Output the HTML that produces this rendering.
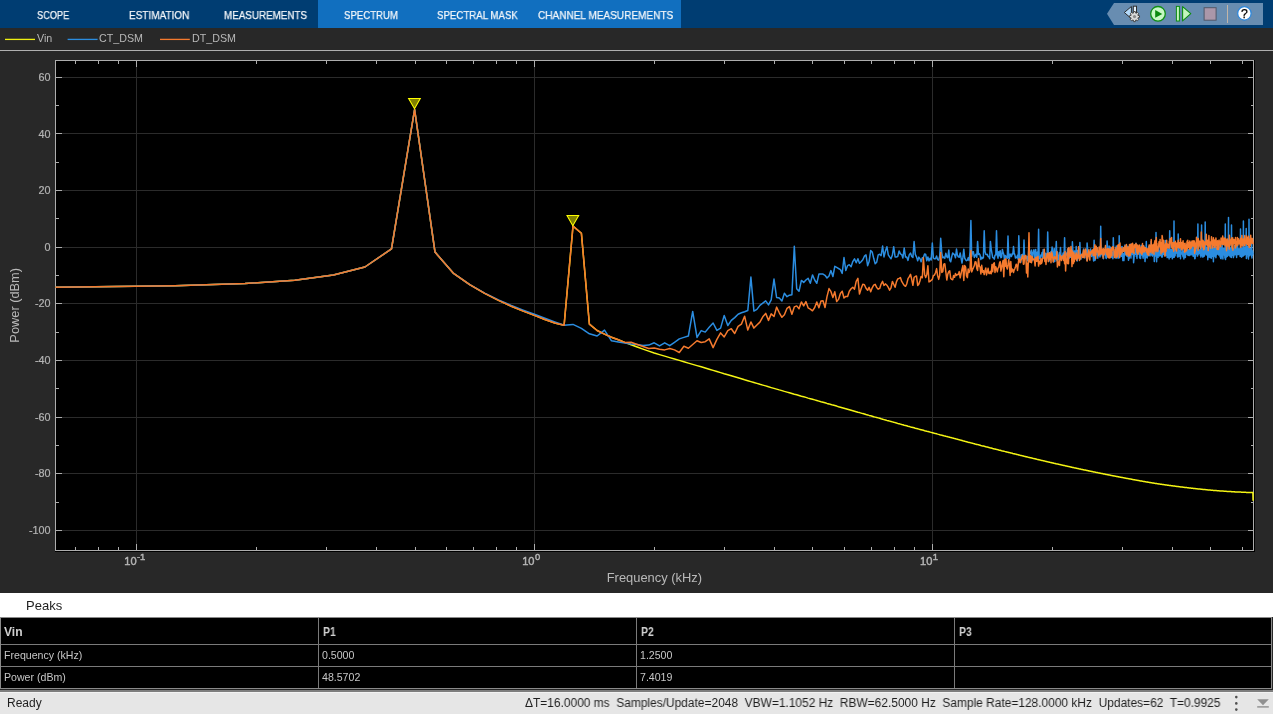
<!DOCTYPE html>
<html><head><meta charset="utf-8"><title>Spectrum Analyzer</title>
<style>
*{box-sizing:border-box;margin:0;padding:0}
html,body{width:1273px;height:714px;overflow:hidden;background:#282828;font-family:"Liberation Sans",sans-serif}
#root{position:relative;width:1273px;height:714px;overflow:hidden;background:#282828}
#hdr{position:absolute;left:0;top:0;width:1273px;height:28px;background:#003d72}
#hdr .act{position:absolute;left:318px;top:0;width:363px;height:28px;background:#116fbf}
.tab{-webkit-text-stroke:0.25px #f4f7fa;will-change:transform;position:absolute;top:1px;height:28px;line-height:29px;color:#f4f7fa;font-size:11.1px;white-space:nowrap;transform-origin:0 50%}
#qab{position:absolute;left:0;top:0}
#legend{position:absolute;left:0;top:28px;width:1273px;height:22px}
#legend .ln{position:absolute;top:10.8px;height:1.2px;width:30px}
#legend .tx{will-change:transform;position:absolute;top:4px;font-size:10.7px;line-height:13px;color:#b8b8b8;white-space:nowrap}
#sep{position:absolute;left:0;top:50px;width:1273px;height:1px;background:#b0b0b0}
.plot{position:absolute;left:0;top:0}
#peaks{position:absolute;left:0;top:593px;width:1273px;height:24px;background:#fff;color:#1e1e1e;font-size:13px;line-height:24px}
#peaks span{will-change:transform;position:absolute;left:26.2px;top:1px}
#tbl{position:absolute;left:0;top:617px;width:1272px;height:72px;background:#000;border:1px solid #8a8a8a}
#tbl .h{position:absolute;left:0;width:1270px;height:1px;background:#7a7a7a}
#tbl .v{position:absolute;top:0;width:1px;height:70px;background:#7a7a7a}
#tbl .c{will-change:transform;position:absolute;font-size:10.6px;line-height:13px;color:#c6c6c6;white-space:nowrap;transform-origin:0 50%}
#tbl .b{font-weight:bold;color:#cfcfcf;font-size:12.1px}
#status{position:absolute;left:0;top:692px;width:1273px;height:22px;background:#e6e6e6;color:#1e1e1e;font-size:12px;line-height:24px}
#status span{will-change:transform;position:absolute;top:-1px;white-space:nowrap;transform-origin:0 50%}
</style></head><body>
<div id="root">
<div id="hdr"><div class="act"></div>
<div class="tab" id="t1" style="left:36.8px;transform:scaleX(0.829)">SCOPE</div>
<div class="tab" id="t2" style="left:128.6px;transform:scaleX(0.900)">ESTIMATION</div>
<div class="tab" id="t3" style="left:223.6px;transform:scaleX(0.886)">MEASUREMENTS</div>
<div class="tab" id="t4" style="left:343.7px;transform:scaleX(0.866)">SPECTRUM</div>
<div class="tab" id="t5" style="left:436.6px;transform:scaleX(0.872)">SPECTRAL MASK</div>
<div class="tab" id="t6" style="left:537.8px;transform:scaleX(0.905)">CHANNEL MEASUREMENTS</div>
<svg id="qab" width="1273" height="28" viewBox="0 0 1273 28">
<path d="M1107,13.8 L1114,3 L1263,3 L1263,25 L1114,25 Z" fill="#688db1"/>
<!-- step back with gear -->
<path d="M1124.3,12.5 L1131.4,6.5 L1131.4,18.6 Z" fill="#b5dafa" stroke="#2e2e2e" stroke-width="1" stroke-linejoin="round"/>
<rect x="1133.3" y="6.2" width="3.2" height="9.5" fill="#e4f1fc" stroke="#2e2e2e" stroke-width="1"/>
<g transform="translate(1134.5,16.6)"><path d="M3.35,-1.31 L5.03,-0.84 L5.03,0.84 L3.35,1.31 L3.30,1.44 L4.15,2.97 L2.97,4.15 L1.44,3.30 L1.31,3.35 L0.84,5.03 L-0.84,5.03 L-1.31,3.35 L-1.44,3.30 L-2.97,4.15 L-4.15,2.97 L-3.30,1.44 L-3.35,1.31 L-5.03,0.84 L-5.03,-0.84 L-3.35,-1.31 L-3.30,-1.44 L-4.15,-2.97 L-2.97,-4.15 L-1.44,-3.30 L-1.31,-3.35 L-0.84,-5.03 L0.84,-5.03 L1.31,-3.35 L1.44,-3.30 L2.97,-4.15 L4.15,-2.97 L3.30,-1.44 Z" fill="#dadada" stroke="#3a3a3a" stroke-width="0.9" stroke-linejoin="round"/><circle r="1.6" fill="#8c8c8c"/></g>
<!-- play -->
<circle cx="1158" cy="13.8" r="7.3" fill="#c8f8c4" stroke="#0f8f14" stroke-width="1.3"/>
<path d="M1155.2,10 L1162.3,13.9 L1155.2,17.8 Z" fill="#0a8a0f"/>
<!-- step fwd -->
<rect x="1176.4" y="6.4" width="3" height="14.6" fill="#c3f5be" stroke="#0d8c12" stroke-width="1"/>
<path d="M1182.6,6.6 L1190.8,13.7 L1182.6,20.8 Z" fill="#c3f5be" stroke="#0d8c12" stroke-width="1.1" stroke-linejoin="round"/>
<!-- stop -->
<rect x="1204.1" y="7.7" width="12" height="12.5" fill="#ab97a9" stroke="#515868" stroke-width="1"/>
<!-- sep -->
<rect x="1227" y="5" width="1" height="18" fill="#c2b5a7"/>
<!-- help -->
<circle cx="1244.4" cy="13.4" r="6.7" fill="#fff" stroke="#2a87de" stroke-width="1.2"/>
<text x="1244.5" y="17.8" text-anchor="middle" font-family="Liberation Sans, sans-serif" font-size="12.2" fill="#000" stroke="#000" stroke-width="0.25">?</text>
</svg>
</div>
<div id="legend"><svg style="position:absolute;left:0;top:0" width="260" height="22" viewBox="0 0 260 22"><g stroke-width="1.3" fill="none"><path d="M5,11.4H35" stroke="#f0f010"/><path d="M67.6,11.4H97.6" stroke="#2b8de0"/><path d="M160,11.4H189.8" stroke="#f57a2e"/></g></svg>
<div class="tx" style="left:37px">Vin</div>
<div class="tx" style="left:99.3px">CT_DSM</div>
<div class="tx" style="left:191.8px">DT_DSM</div>
</div>
<div id="sep"></div>
<svg class="plot" width="1273" height="593" viewBox="0 0 1273 593">
<rect x="55.0" y="60.0" width="1200.0" height="492.0" fill="#000"/>
<g stroke="#2b2b2b" stroke-width="1" shape-rendering="crispEdges"><line x1="55.5" x2="1253.5" y1="77.5" y2="77.5"/><line x1="55.5" x2="1253.5" y1="133.5" y2="133.5"/><line x1="55.5" x2="1253.5" y1="190.5" y2="190.5"/><line x1="55.5" x2="1253.5" y1="247.5" y2="247.5"/><line x1="55.5" x2="1253.5" y1="303.5" y2="303.5"/><line x1="55.5" x2="1253.5" y1="360.5" y2="360.5"/><line x1="55.5" x2="1253.5" y1="417.5" y2="417.5"/><line x1="55.5" x2="1253.5" y1="473.5" y2="473.5"/><line x1="55.5" x2="1253.5" y1="530.5" y2="530.5"/><line x1="136.5" x2="136.5" y1="60.5" y2="550.5"/><line x1="534.5" x2="534.5" y1="60.5" y2="550.5"/><line x1="932.5" x2="932.5" y1="60.5" y2="550.5"/></g>
<g stroke="#adadad" stroke-width="1" shape-rendering="crispEdges"><line x1="55.5" x2="61.5" y1="77.5" y2="77.5"/><line x1="1247.5" x2="1253.5" y1="77.5" y2="77.5"/><line x1="55.5" x2="58.5" y1="105.5" y2="105.5"/><line x1="1250.5" x2="1253.5" y1="105.5" y2="105.5"/><line x1="55.5" x2="61.5" y1="133.5" y2="133.5"/><line x1="1247.5" x2="1253.5" y1="133.5" y2="133.5"/><line x1="55.5" x2="58.5" y1="162.5" y2="162.5"/><line x1="1250.5" x2="1253.5" y1="162.5" y2="162.5"/><line x1="55.5" x2="61.5" y1="190.5" y2="190.5"/><line x1="1247.5" x2="1253.5" y1="190.5" y2="190.5"/><line x1="55.5" x2="58.5" y1="218.5" y2="218.5"/><line x1="1250.5" x2="1253.5" y1="218.5" y2="218.5"/><line x1="55.5" x2="61.5" y1="247.5" y2="247.5"/><line x1="1247.5" x2="1253.5" y1="247.5" y2="247.5"/><line x1="55.5" x2="58.5" y1="275.5" y2="275.5"/><line x1="1250.5" x2="1253.5" y1="275.5" y2="275.5"/><line x1="55.5" x2="61.5" y1="303.5" y2="303.5"/><line x1="1247.5" x2="1253.5" y1="303.5" y2="303.5"/><line x1="55.5" x2="58.5" y1="332.5" y2="332.5"/><line x1="1250.5" x2="1253.5" y1="332.5" y2="332.5"/><line x1="55.5" x2="61.5" y1="360.5" y2="360.5"/><line x1="1247.5" x2="1253.5" y1="360.5" y2="360.5"/><line x1="55.5" x2="58.5" y1="388.5" y2="388.5"/><line x1="1250.5" x2="1253.5" y1="388.5" y2="388.5"/><line x1="55.5" x2="61.5" y1="417.5" y2="417.5"/><line x1="1247.5" x2="1253.5" y1="417.5" y2="417.5"/><line x1="55.5" x2="58.5" y1="445.5" y2="445.5"/><line x1="1250.5" x2="1253.5" y1="445.5" y2="445.5"/><line x1="55.5" x2="61.5" y1="473.5" y2="473.5"/><line x1="1247.5" x2="1253.5" y1="473.5" y2="473.5"/><line x1="55.5" x2="58.5" y1="502.5" y2="502.5"/><line x1="1250.5" x2="1253.5" y1="502.5" y2="502.5"/><line x1="55.5" x2="61.5" y1="530.5" y2="530.5"/><line x1="1247.5" x2="1253.5" y1="530.5" y2="530.5"/><line x1="75.5" x2="75.5" y1="60.5" y2="64.0"/><line x1="75.5" x2="75.5" y1="547.0" y2="550.5"/><line x1="98.5" x2="98.5" y1="60.5" y2="64.0"/><line x1="98.5" x2="98.5" y1="547.0" y2="550.5"/><line x1="118.5" x2="118.5" y1="60.5" y2="64.0"/><line x1="118.5" x2="118.5" y1="547.0" y2="550.5"/><line x1="136.5" x2="136.5" y1="60.5" y2="66.5"/><line x1="136.5" x2="136.5" y1="543.5" y2="550.5"/><line x1="256.5" x2="256.5" y1="60.5" y2="64.0"/><line x1="256.5" x2="256.5" y1="547.0" y2="550.5"/><line x1="326.5" x2="326.5" y1="60.5" y2="64.0"/><line x1="326.5" x2="326.5" y1="547.0" y2="550.5"/><line x1="376.5" x2="376.5" y1="60.5" y2="64.0"/><line x1="376.5" x2="376.5" y1="547.0" y2="550.5"/><line x1="415.5" x2="415.5" y1="60.5" y2="64.0"/><line x1="415.5" x2="415.5" y1="547.0" y2="550.5"/><line x1="446.5" x2="446.5" y1="60.5" y2="64.0"/><line x1="446.5" x2="446.5" y1="547.0" y2="550.5"/><line x1="473.5" x2="473.5" y1="60.5" y2="64.0"/><line x1="473.5" x2="473.5" y1="547.0" y2="550.5"/><line x1="496.5" x2="496.5" y1="60.5" y2="64.0"/><line x1="496.5" x2="496.5" y1="547.0" y2="550.5"/><line x1="516.5" x2="516.5" y1="60.5" y2="64.0"/><line x1="516.5" x2="516.5" y1="547.0" y2="550.5"/><line x1="534.5" x2="534.5" y1="60.5" y2="66.5"/><line x1="534.5" x2="534.5" y1="543.5" y2="550.5"/><line x1="654.5" x2="654.5" y1="60.5" y2="64.0"/><line x1="654.5" x2="654.5" y1="547.0" y2="550.5"/><line x1="724.5" x2="724.5" y1="60.5" y2="64.0"/><line x1="724.5" x2="724.5" y1="547.0" y2="550.5"/><line x1="774.5" x2="774.5" y1="60.5" y2="64.0"/><line x1="774.5" x2="774.5" y1="547.0" y2="550.5"/><line x1="812.5" x2="812.5" y1="60.5" y2="64.0"/><line x1="812.5" x2="812.5" y1="547.0" y2="550.5"/><line x1="844.5" x2="844.5" y1="60.5" y2="64.0"/><line x1="844.5" x2="844.5" y1="547.0" y2="550.5"/><line x1="871.5" x2="871.5" y1="60.5" y2="64.0"/><line x1="871.5" x2="871.5" y1="547.0" y2="550.5"/><line x1="894.5" x2="894.5" y1="60.5" y2="64.0"/><line x1="894.5" x2="894.5" y1="547.0" y2="550.5"/><line x1="914.5" x2="914.5" y1="60.5" y2="64.0"/><line x1="914.5" x2="914.5" y1="547.0" y2="550.5"/><line x1="932.5" x2="932.5" y1="60.5" y2="66.5"/><line x1="932.5" x2="932.5" y1="543.5" y2="550.5"/><line x1="1052.5" x2="1052.5" y1="60.5" y2="64.0"/><line x1="1052.5" x2="1052.5" y1="547.0" y2="550.5"/><line x1="1122.5" x2="1122.5" y1="60.5" y2="64.0"/><line x1="1122.5" x2="1122.5" y1="547.0" y2="550.5"/><line x1="1172.5" x2="1172.5" y1="60.5" y2="64.0"/><line x1="1172.5" x2="1172.5" y1="547.0" y2="550.5"/><line x1="1210.5" x2="1210.5" y1="60.5" y2="64.0"/><line x1="1210.5" x2="1210.5" y1="547.0" y2="550.5"/><line x1="1242.5" x2="1242.5" y1="60.5" y2="64.0"/><line x1="1242.5" x2="1242.5" y1="547.0" y2="550.5"/></g>
<rect x="55.5" y="60.5" width="1198.0" height="490.0" fill="none" stroke="#adadad" stroke-width="1" shape-rendering="crispEdges"/>
<g fill="none" stroke-width="1.5" stroke-linejoin="round">
<path stroke="#f5f514" d="M55.3,287.3 L175.1,285.7 L245.1,283.6 L294.8,280.2 L333.4,275.1 L364.9,267.0 L391.5,248.9 L414.6,109.5 L435.0,252.1 L453.2,273.1 L469.7,284.7 L484.7,293.4 L498.5,300.4 L511.3,306.2 L523.2,311.1 L534.4,315.4 L544.9,319.5 L554.8,323.0 L564.1,325.3 L573.0,226.1 L581.4,233.2 L589.4,324.2 L597.1,330.5 L604.5,334.1 L611.5,337.2 L618.3,339.8 L624.8,342.4 L631.1,344.7 L637.2,347.0 L643.0,349.1 L648.7,351.1 L654.2,353.0 L659.5,354.6 L664.7,356.1 L669.7,357.6 L674.5,359.0 L679.3,360.4 L683.9,361.8 L688.4,363.1 L692.7,364.4 L697.0,365.6 L701.2,366.8 L705.2,368.0 L709.2,369.2 L713.1,370.4 L716.9,371.5 L720.6,372.6 L724.2,373.7 L727.8,374.7 L731.3,375.8 L734.7,376.8 L738.1,377.8 L741.4,378.8 L744.6,379.8 L747.8,380.7 L750.9,381.6 L753.9,382.5 L756.9,383.4 L759.9,384.3 L762.8,385.1 L765.7,385.9 L768.5,386.8 L771.2,387.6 L774.0,388.4 L776.6,389.1 L779.3,389.9 L781.9,390.6 L784.4,391.4 L787.0,392.1 L789.4,392.8 L791.9,393.5 L794.3,394.2 L796.7,394.8 L799.0,395.5 L801.4,396.2 L803.7,396.8 L805.9,397.4 L808.1,398.1 L810.3,398.7 L812.5,399.3 L814.7,399.9 L816.8,400.5 L818.9,401.1 L821.0,401.7 L823.0,402.2 L825.0,402.8 L827.0,403.4 L829.0,403.9 L830.9,404.5 L832.9,405.1 L834.8,405.6 L836.7,406.1 L838.5,406.7 L840.4,407.2 L842.2,407.7 L844.0,408.2 L845.8,408.7 L847.6,409.2 L849.3,409.7 L851.1,410.2 L852.8,410.7 L854.5,411.2 L856.2,411.7 L857.9,412.2 L859.5,412.6 L861.1,413.1 L862.8,413.6 L864.4,414.0 L866.0,414.5 L867.6,414.9 L869.1,415.4 L870.7,415.8 L872.2,416.2 L873.7,416.7 L875.2,417.1 L876.7,417.5 L878.2,417.9 L879.7,418.3 L881.1,418.8 L882.6,419.2 L884.0,419.6 L885.4,420.0 L886.9,420.4 L888.3,420.7 L889.6,421.1 L891.0,421.5 L892.4,421.9 L893.7,422.3 L895.1,422.6 L896.4,423.0 L897.7,423.4 L899.1,423.7 L900.4,424.1 L901.7,424.5 L902.9,424.8 L904.2,425.2 L905.5,425.5 L906.7,425.8 L908.0,426.2 L909.2,426.5 L910.5,426.9 L911.7,427.2 L912.9,427.5 L914.1,427.8 L915.3,428.2 L916.5,428.5 L917.7,428.8 L918.8,429.1 L920.0,429.4 L921.1,429.7 L922.3,430.0 L923.4,430.3 L924.6,430.7 L925.7,431.0 L926.8,431.3 L927.9,431.5 L929.0,431.8 L930.1,432.1 L931.2,432.4 L932.3,432.7 L933.4,433.0 L934.4,433.3 L935.5,433.6 L936.6,433.8 L937.6,434.1 L938.7,434.4 L939.7,434.7 L940.7,434.9 L941.8,435.2 L942.8,435.5 L943.8,435.8 L944.8,436.0 L945.8,436.3 L946.8,436.5 L947.8,436.8 L948.8,437.1 L949.7,437.3 L950.7,437.6 L951.7,437.8 L952.7,438.1 L953.6,438.3 L954.6,438.6 L955.5,438.8 L956.5,439.1 L957.4,439.3 L958.3,439.6 L959.2,439.8 L960.2,440.1 L961.1,440.3 L962.0,440.5 L962.9,440.8 L963.8,441.0 L964.7,441.3 L965.6,441.5 L966.5,441.7 L967.4,441.9 L968.2,442.2 L969.1,442.4 L970.0,442.6 L970.9,442.9 L971.7,443.1 L972.6,443.3 L973.4,443.5 L974.3,443.7 L975.1,444.0 L976.0,444.2 L976.8,444.4 L977.6,444.6 L978.5,444.8 L979.3,445.0 L980.1,445.2 L980.9,445.5 L981.7,445.7 L982.6,445.9 L983.4,446.1 L984.2,446.3 L985.0,446.5 L985.8,446.7 L986.5,446.9 L987.3,447.1 L988.1,447.3 L988.9,447.5 L989.7,447.7 L990.4,447.9 L991.2,448.1 L992.0,448.3 L992.7,448.5 L993.5,448.7 L994.3,448.9 L995.0,449.0 L995.8,449.2 L996.5,449.4 L997.3,449.6 L998.0,449.8 L998.7,450.0 L999.5,450.2 L1000.2,450.3 L1000.9,450.5 L1001.6,450.7 L1002.4,450.9 L1003.1,451.1 L1003.8,451.2 L1004.5,451.4 L1005.2,451.6 L1005.9,451.8 L1006.6,452.0 L1007.3,452.1 L1008.0,452.3 L1008.7,452.5 L1009.4,452.6 L1010.1,452.8 L1010.8,453.0 L1011.5,453.1 L1012.2,453.3 L1012.8,453.5 L1013.5,453.7 L1014.2,453.8 L1014.9,454.0 L1015.5,454.1 L1016.2,454.3 L1016.9,454.5 L1017.5,454.6 L1018.2,454.8 L1018.8,455.0 L1019.5,455.1 L1020.1,455.3 L1020.8,455.4 L1021.4,455.6 L1022.1,455.7 L1022.7,455.9 L1023.4,456.0 L1024.0,456.2 L1024.6,456.4 L1025.3,456.5 L1025.9,456.7 L1026.5,456.8 L1027.1,457.0 L1027.8,457.1 L1028.4,457.3 L1029.0,457.4 L1029.6,457.5 L1030.2,457.7 L1030.8,457.8 L1031.5,458.0 L1032.1,458.1 L1032.7,458.3 L1033.3,458.4 L1033.9,458.6 L1034.5,458.7 L1035.1,458.8 L1035.7,459.0 L1036.3,459.1 L1036.8,459.3 L1037.4,459.4 L1038.0,459.5 L1038.6,459.7 L1039.2,459.8 L1039.8,459.9 L1040.4,460.1 L1040.9,460.2 L1041.5,460.4 L1042.1,460.5 L1042.6,460.6 L1043.2,460.7 L1043.8,460.9 L1044.3,461.0 L1044.9,461.1 L1045.5,461.3 L1046.0,461.4 L1046.6,461.5 L1047.2,461.7 L1047.7,461.8 L1048.3,461.9 L1048.8,462.0 L1049.4,462.2 L1049.9,462.3 L1050.5,462.4 L1051.0,462.5 L1051.5,462.7 L1052.1,462.8 L1052.6,462.9 L1053.2,463.0 L1053.7,463.2 L1054.2,463.3 L1054.8,463.4 L1055.3,463.5 L1055.8,463.7 L1056.3,463.8 L1056.9,463.9 L1057.4,464.0 L1057.9,464.1 L1058.4,464.2 L1059.0,464.4 L1059.5,464.5 L1060.0,464.6 L1060.5,464.7 L1061.0,464.8 L1061.5,464.9 L1062.0,465.1 L1062.6,465.2 L1063.1,465.3 L1063.6,465.4 L1064.1,465.5 L1064.6,465.6 L1065.1,465.7 L1065.6,465.9 L1066.1,466.0 L1066.6,466.1 L1067.1,466.2 L1067.6,466.3 L1068.1,466.4 L1068.5,466.5 L1069.0,466.6 L1069.5,466.7 L1070.0,466.8 L1070.5,466.9 L1071.0,467.0 L1071.5,467.2 L1072.0,467.3 L1072.4,467.4 L1072.9,467.5 L1073.4,467.6 L1073.9,467.7 L1074.3,467.8 L1074.8,467.9 L1075.3,468.0 L1075.8,468.1 L1076.2,468.2 L1076.7,468.3 L1077.2,468.4 L1077.6,468.5 L1078.1,468.6 L1078.6,468.7 L1079.0,468.8 L1079.5,468.9 L1079.9,469.0 L1080.4,469.1 L1080.9,469.2 L1081.3,469.3 L1081.8,469.4 L1082.2,469.5 L1082.7,469.6 L1083.1,469.7 L1083.6,469.8 L1084.0,469.9 L1084.5,470.0 L1084.9,470.0 L1085.4,470.1 L1085.8,470.2 L1086.3,470.3 L1086.7,470.4 L1087.1,470.5 L1087.6,470.6 L1088.0,470.7 L1088.5,470.8 L1088.9,470.9 L1089.3,471.0 L1089.8,471.1 L1090.2,471.2 L1090.6,471.2 L1091.1,471.3 L1091.5,471.4 L1091.9,471.5 L1092.4,471.6 L1092.8,471.7 L1093.2,471.8 L1093.6,471.9 L1094.1,472.0 L1094.5,472.0 L1094.9,472.1 L1095.3,472.2 L1095.7,472.3 L1096.2,472.4 L1096.6,472.5 L1097.0,472.6 L1097.4,472.6 L1097.8,472.7 L1098.2,472.8 L1098.7,472.9 L1099.1,473.0 L1099.5,473.1 L1099.9,473.2 L1100.3,473.2 L1100.7,473.3 L1101.1,473.4 L1101.5,473.5 L1101.9,473.6 L1102.3,473.6 L1102.7,473.7 L1103.1,473.8 L1103.5,473.9 L1103.9,474.0 L1104.3,474.1 L1104.7,474.1 L1105.1,474.2 L1105.5,474.3 L1105.9,474.4 L1106.3,474.5 L1106.7,474.5 L1107.1,474.6 L1107.5,474.7 L1107.9,474.8 L1108.3,474.8 L1108.7,474.9 L1109.1,475.0 L1109.5,475.1 L1109.8,475.1 L1110.2,475.2 L1110.6,475.3 L1111.0,475.4 L1111.4,475.4 L1111.8,475.5 L1112.1,475.6 L1112.5,475.7 L1112.9,475.7 L1113.3,475.8 L1113.7,475.9 L1114.0,476.0 L1114.4,476.0 L1114.8,476.1 L1115.2,476.2 L1115.5,476.3 L1115.9,476.3 L1116.3,476.4 L1116.7,476.5 L1117.0,476.5 L1117.4,476.6 L1117.8,476.7 L1118.1,476.7 L1118.5,476.8 L1118.9,476.9 L1119.2,477.0 L1119.6,477.0 L1120.0,477.1 L1120.3,477.2 L1120.7,477.2 L1121.1,477.3 L1121.4,477.4 L1121.8,477.4 L1122.1,477.5 L1122.5,477.6 L1122.9,477.6 L1123.2,477.7 L1123.6,477.8 L1123.9,477.8 L1124.3,477.9 L1124.6,478.0 L1125.0,478.0 L1125.4,478.1 L1125.7,478.2 L1126.1,478.2 L1126.4,478.3 L1126.8,478.4 L1127.1,478.4 L1127.5,478.5 L1127.8,478.6 L1128.2,478.6 L1128.5,478.7 L1128.9,478.8 L1129.2,478.8 L1129.5,478.9 L1129.9,479.0 L1130.2,479.0 L1130.6,479.1 L1130.9,479.1 L1131.3,479.2 L1131.6,479.3 L1131.9,479.3 L1132.3,479.4 L1132.6,479.5 L1133.0,479.5 L1133.3,479.6 L1133.6,479.7 L1134.0,479.7 L1134.3,479.8 L1134.6,479.8 L1135.0,479.9 L1135.3,480.0 L1135.6,480.0 L1136.0,480.1 L1136.3,480.1 L1136.6,480.2 L1137.0,480.3 L1137.3,480.3 L1137.6,480.4 L1138.0,480.4 L1138.3,480.5 L1138.6,480.6 L1138.9,480.6 L1139.3,480.7 L1139.6,480.7 L1139.9,480.8 L1140.2,480.9 L1140.6,480.9 L1140.9,481.0 L1141.2,481.0 L1141.5,481.1 L1141.9,481.1 L1142.2,481.2 L1142.5,481.3 L1142.8,481.3 L1143.1,481.4 L1143.5,481.4 L1143.8,481.5 L1144.1,481.5 L1144.4,481.6 L1144.7,481.6 L1145.0,481.7 L1145.4,481.8 L1145.7,481.8 L1146.0,481.9 L1146.3,481.9 L1146.6,482.0 L1146.9,482.0 L1147.2,482.1 L1147.5,482.1 L1147.9,482.2 L1148.2,482.2 L1148.5,482.3 L1148.8,482.3 L1149.1,482.4 L1149.4,482.4 L1149.7,482.5 L1150.0,482.5 L1150.3,482.6 L1150.6,482.6 L1150.9,482.7 L1151.2,482.7 L1151.5,482.8 L1151.8,482.8 L1152.1,482.9 L1152.4,482.9 L1152.8,483.0 L1153.1,483.0 L1153.4,483.1 L1153.7,483.1 L1154.0,483.2 L1154.3,483.2 L1154.6,483.3 L1154.8,483.3 L1155.1,483.4 L1155.4,483.4 L1155.7,483.5 L1156.0,483.5 L1156.3,483.6 L1156.6,483.6 L1156.9,483.6 L1157.2,483.7 L1157.5,483.7 L1157.8,483.8 L1158.1,483.8 L1158.4,483.9 L1158.7,483.9 L1159.0,483.9 L1159.3,484.0 L1159.6,484.0 L1159.8,484.1 L1160.1,484.1 L1160.4,484.2 L1160.7,484.2 L1161.0,484.2 L1161.3,484.3 L1161.6,484.3 L1161.9,484.4 L1162.1,484.4 L1162.4,484.5 L1162.7,484.5 L1163.0,484.5 L1163.3,484.6 L1163.6,484.6 L1163.8,484.7 L1164.1,484.7 L1164.4,484.7 L1164.7,484.8 L1165.0,484.8 L1165.3,484.9 L1165.5,484.9 L1165.8,484.9 L1166.1,485.0 L1166.4,485.0 L1166.7,485.0 L1166.9,485.1 L1167.2,485.1 L1167.5,485.2 L1167.8,485.2 L1168.0,485.2 L1168.3,485.3 L1168.6,485.3 L1168.9,485.4 L1169.1,485.4 L1169.4,485.4 L1169.7,485.5 L1170.0,485.5 L1170.2,485.5 L1170.5,485.6 L1170.8,485.6 L1171.0,485.7 L1171.3,485.7 L1171.6,485.7 L1171.9,485.8 L1172.1,485.8 L1172.4,485.8 L1172.7,485.9 L1172.9,485.9 L1173.2,485.9 L1173.5,486.0 L1173.7,486.0 L1174.0,486.0 L1174.3,486.1 L1174.5,486.1 L1174.8,486.1 L1175.1,486.2 L1175.3,486.2 L1175.6,486.3 L1175.9,486.3 L1176.1,486.3 L1176.4,486.4 L1176.7,486.4 L1176.9,486.4 L1177.2,486.5 L1177.4,486.5 L1177.7,486.5 L1178.0,486.6 L1178.2,486.6 L1178.5,486.6 L1178.7,486.7 L1179.0,486.7 L1179.3,486.7 L1179.5,486.8 L1179.8,486.8 L1180.0,486.8 L1180.3,486.9 L1180.5,486.9 L1180.8,486.9 L1181.1,486.9 L1181.3,487.0 L1181.6,487.0 L1181.8,487.0 L1182.1,487.1 L1182.3,487.1 L1182.6,487.1 L1182.8,487.2 L1183.1,487.2 L1183.3,487.2 L1183.6,487.3 L1183.9,487.3 L1184.1,487.3 L1184.4,487.4 L1184.6,487.4 L1184.9,487.4 L1185.1,487.4 L1185.4,487.5 L1185.6,487.5 L1185.9,487.5 L1186.1,487.6 L1186.4,487.6 L1186.6,487.6 L1186.9,487.6 L1187.1,487.7 L1187.3,487.7 L1187.6,487.7 L1187.8,487.8 L1188.1,487.8 L1188.3,487.8 L1188.6,487.8 L1188.8,487.9 L1189.1,487.9 L1189.3,487.9 L1189.6,488.0 L1189.8,488.0 L1190.0,488.0 L1190.3,488.0 L1190.5,488.1 L1190.8,488.1 L1191.0,488.1 L1191.3,488.2 L1191.5,488.2 L1191.7,488.2 L1192.0,488.2 L1192.2,488.3 L1192.5,488.3 L1192.7,488.3 L1192.9,488.3 L1193.2,488.4 L1193.4,488.4 L1193.6,488.4 L1193.9,488.4 L1194.1,488.5 L1194.4,488.5 L1194.6,488.5 L1194.8,488.6 L1195.1,488.6 L1195.3,488.6 L1195.5,488.6 L1195.8,488.7 L1196.0,488.7 L1196.2,488.7 L1196.5,488.7 L1196.7,488.8 L1196.9,488.8 L1197.2,488.8 L1197.4,488.8 L1197.6,488.9 L1197.9,488.9 L1198.1,488.9 L1198.3,488.9 L1198.6,489.0 L1198.8,489.0 L1199.0,489.0 L1199.3,489.0 L1199.5,489.0 L1199.7,489.1 L1200.0,489.1 L1200.2,489.1 L1200.4,489.1 L1200.6,489.2 L1200.9,489.2 L1201.1,489.2 L1201.3,489.2 L1201.6,489.3 L1201.8,489.3 L1202.0,489.3 L1202.2,489.3 L1202.5,489.4 L1202.7,489.4 L1202.9,489.4 L1203.1,489.4 L1203.4,489.4 L1203.6,489.5 L1203.8,489.5 L1204.0,489.5 L1204.3,489.5 L1204.5,489.6 L1204.7,489.6 L1204.9,489.6 L1205.2,489.6 L1205.4,489.6 L1205.6,489.7 L1205.8,489.7 L1206.0,489.7 L1206.3,489.7 L1206.5,489.7 L1206.7,489.8 L1206.9,489.8 L1207.1,489.8 L1207.4,489.8 L1207.6,489.9 L1207.8,489.9 L1208.0,489.9 L1208.2,489.9 L1208.5,489.9 L1208.7,490.0 L1208.9,490.0 L1209.1,490.0 L1209.3,490.0 L1209.6,490.0 L1209.8,490.1 L1210.0,490.1 L1210.2,490.1 L1210.4,490.1 L1210.6,490.1 L1210.9,490.2 L1211.1,490.2 L1211.3,490.2 L1211.5,490.2 L1211.7,490.2 L1211.9,490.2 L1212.1,490.3 L1212.4,490.3 L1212.6,490.3 L1212.8,490.3 L1213.0,490.3 L1213.2,490.4 L1213.4,490.4 L1213.6,490.4 L1213.8,490.4 L1214.1,490.4 L1214.3,490.5 L1214.5,490.5 L1214.7,490.5 L1214.9,490.5 L1215.1,490.5 L1215.3,490.5 L1215.5,490.6 L1215.7,490.6 L1215.9,490.6 L1216.2,490.6 L1216.4,490.6 L1216.6,490.6 L1216.8,490.7 L1217.0,490.7 L1217.2,490.7 L1217.4,490.7 L1217.6,490.7 L1217.8,490.7 L1218.0,490.8 L1218.2,490.8 L1218.4,490.8 L1218.6,490.8 L1218.9,490.8 L1219.1,490.8 L1219.3,490.8 L1219.5,490.9 L1219.7,490.9 L1219.9,490.9 L1220.1,490.9 L1220.3,490.9 L1220.5,490.9 L1220.7,490.9 L1220.9,491.0 L1221.1,491.0 L1221.3,491.0 L1221.5,491.0 L1221.7,491.0 L1221.9,491.0 L1222.1,491.1 L1222.3,491.1 L1222.5,491.1 L1222.7,491.1 L1222.9,491.1 L1223.1,491.1 L1223.3,491.1 L1223.5,491.1 L1223.7,491.2 L1223.9,491.2 L1224.1,491.2 L1224.3,491.2 L1224.5,491.2 L1224.7,491.2 L1224.9,491.2 L1225.1,491.3 L1225.3,491.3 L1225.5,491.3 L1225.7,491.3 L1225.9,491.3 L1226.1,491.3 L1226.3,491.3 L1226.5,491.3 L1226.7,491.4 L1226.9,491.4 L1227.1,491.4 L1227.3,491.4 L1227.5,491.4 L1227.7,491.4 L1227.9,491.4 L1228.1,491.4 L1228.3,491.5 L1228.5,491.5 L1228.6,491.5 L1228.8,491.5 L1229.0,491.5 L1229.2,491.5 L1229.4,491.5 L1229.6,491.5 L1229.8,491.6 L1230.0,491.6 L1230.2,491.6 L1230.4,491.6 L1230.6,491.6 L1230.8,491.6 L1231.0,491.6 L1231.2,491.6 L1231.3,491.7 L1231.5,491.7 L1231.7,491.7 L1231.9,491.7 L1232.1,491.7 L1232.3,491.7 L1232.5,491.7 L1232.7,491.7 L1232.9,491.7 L1233.1,491.7 L1233.3,491.8 L1233.4,491.8 L1233.6,491.8 L1233.8,491.8 L1234.0,491.8 L1234.2,491.8 L1234.4,491.8 L1234.6,491.8 L1234.8,491.8 L1234.9,491.9 L1235.1,491.9 L1235.3,491.9 L1235.5,491.9 L1235.7,491.9 L1235.9,491.9 L1236.1,491.9 L1236.3,491.9 L1236.4,491.9 L1236.6,491.9 L1236.8,491.9 L1237.0,492.0 L1237.2,492.0 L1237.4,492.0 L1237.6,492.0 L1237.7,492.0 L1237.9,492.0 L1238.1,492.0 L1238.3,492.0 L1238.5,492.0 L1238.7,492.0 L1238.8,492.0 L1239.0,492.1 L1239.2,492.1 L1239.4,492.1 L1239.6,492.1 L1239.8,492.1 L1239.9,492.1 L1240.1,492.1 L1240.3,492.1 L1240.5,492.1 L1240.7,492.1 L1240.8,492.1 L1241.0,492.1 L1241.2,492.2 L1241.4,492.2 L1241.6,492.2 L1241.7,492.2 L1241.9,492.2 L1242.1,492.2 L1242.3,492.2 L1242.5,492.2 L1242.6,492.2 L1242.8,492.2 L1243.0,492.2 L1243.2,492.2 L1243.4,492.2 L1243.5,492.2 L1243.7,492.3 L1243.9,492.3 L1244.1,492.3 L1244.3,492.3 L1244.4,492.3 L1244.6,492.3 L1244.8,492.3 L1245.0,492.3 L1245.1,492.3 L1245.3,492.3 L1245.5,492.3 L1245.7,492.3 L1245.8,492.3 L1246.0,492.3 L1246.2,492.4 L1246.4,492.4 L1246.5,492.4 L1246.7,492.4 L1246.9,492.4 L1247.1,492.4 L1247.2,492.4 L1247.4,492.4 L1247.6,492.4 L1247.8,492.4 L1247.9,492.4 L1248.1,492.4 L1248.3,492.4 L1248.5,492.4 L1248.6,492.4 L1248.8,492.4 L1249.0,492.5 L1249.2,492.5 L1249.3,492.5 L1249.5,492.5 L1249.7,492.5 L1249.8,492.5 L1250.0,492.5 L1250.2,492.5 L1250.4,492.5 L1250.5,492.5 L1250.7,492.5 L1250.9,492.5 L1251.0,492.5 L1251.2,492.5 L1251.4,492.5 L1251.6,492.5 L1251.7,492.5 L1251.9,492.5 L1252.1,492.5 L1252.2,492.6 L1252.4,492.6 L1252.6,492.6 L1252.7,492.6 L1252.9,492.6 L1253.1,500.8"/>
<path stroke="#2b8de0" d="M55.3,287.3 L175.1,285.7 L245.1,283.6 L294.8,280.2 L333.4,275.1 L364.9,267.0 L391.5,248.9 L414.6,109.5 L435.0,252.1 L453.2,273.1 L469.7,284.7 L484.7,293.1 L498.5,299.9 L511.3,305.4 L523.2,310.1 L534.4,314.3 L544.9,318.3 L554.8,321.9 L564.1,325.3 L573.0,324.4 L581.4,328.4 L589.4,333.8 L597.1,336.0 L604.5,330.1 L611.5,340.8 L618.3,342.0 L624.8,343.1 L631.1,344.0 L637.2,344.5 L643.0,345.4 L648.7,345.1 L654.2,342.8 L659.5,345.9 L664.7,342.8 L669.7,345.7 L674.5,342.3 L679.3,338.9 L683.9,337.4 L688.4,336.0 L692.7,311.4 L697.0,337.4 L701.2,330.6 L705.2,332.1 L709.2,327.2 L713.1,323.0 L716.9,330.4 L720.6,328.1 L724.2,315.4 L727.8,325.5 L731.3,320.4 L734.7,317.6 L738.1,314.2 L741.4,312.8 L744.6,311.7 L747.8,310.5 L750.9,277.1 L753.9,311.1 L756.9,309.4 L759.9,305.4 L762.8,303.2 L765.7,300.9 L768.5,304.9 L771.2,299.8 L774.0,279.1 L776.6,297.5 L779.3,298.1 L781.9,300.9 L784.4,293.3 L787.0,296.7 L789.4,295.2 L791.9,294.7 L794.3,246.3 L796.7,288.7 L799.0,291.3 L801.4,280.4 L803.7,282.4 L805.9,280.0 L808.1,278.3 L810.3,283.3 L812.5,274.9 L814.7,280.0 L816.8,283.3 L818.9,274.1 L821.0,274.1 L823.0,274.1 L825.0,275.3 L827.0,278.0 L829.0,275.9 L830.9,270.6 L832.9,276.5 L834.8,266.3 L836.7,267.4 L838.5,268.5 L840.4,269.6 L842.2,273.4 L844.0,257.5 L845.8,270.6 L847.6,265.6 L849.3,264.7 L851.1,266.7 L852.8,261.6 L854.5,258.8 L856.2,262.7 L857.9,258.8 L859.5,263.3 L861.1,261.8 L862.8,259.8 L864.4,256.2 L866.0,254.9 L867.6,265.7 L869.1,261.6 L870.7,250.6 L872.2,252.0 L873.7,258.3 L875.2,263.7 L876.7,262.2 L878.2,254.9 L879.7,254.3 L881.1,255.6 L882.6,246.1 L884.0,256.9 L885.4,251.2 L886.9,246.7 L888.3,254.8 L889.6,256.9 L891.0,258.8 L892.4,255.1 L893.7,246.7 L895.1,257.0 L896.4,256.9 L897.7,256.6 L899.1,250.9 L900.4,253.9 L901.7,254.6 L902.9,258.0 L904.2,248.0 L905.5,257.1 L906.7,256.9 L908.0,260.4 L909.2,254.9 L910.5,253.1 L911.7,256.4 L912.9,257.4 L914.1,241.6 L915.3,254.4 L916.5,256.9 L917.7,260.8 L918.8,257.1 L920.0,258.8 L921.1,261.7 L922.3,257.7 L923.4,257.5 L924.6,253.9 L925.7,254.5 L926.8,260.8 L927.9,257.0 L929.0,260.9 L930.1,258.3 L931.2,260.0 L932.3,243.1 L933.4,258.0 L934.4,258.8 L935.5,258.8 L936.6,255.9 L937.6,259.6 L938.7,260.1 L939.7,256.1 L940.7,238.2 L941.8,253.1 L942.8,257.8 L943.8,257.1 L944.8,258.4 L945.8,253.3 L946.8,256.9 L947.8,257.6 L948.8,250.0 L949.7,260.3 L950.7,261.8 L951.7,256.9 L952.7,252.9 L953.6,253.9 L954.6,254.9 L955.5,257.7 L956.5,249.0 L957.4,255.2 L958.3,256.9 L959.2,257.2 L960.2,253.0 L961.1,258.1 L962.0,263.1 L962.9,257.2 L963.8,249.2 L964.7,258.1 L965.6,259.7 L966.5,260.7 L967.4,260.2 L968.2,257.8 L969.1,260.6 L970.0,251.9 L970.9,220.5 L971.7,256.4 L972.6,252.0 L973.4,251.8 L974.3,257.4 L975.1,255.6 L976.0,254.3 L976.8,257.3 L977.6,241.4 L978.5,254.5 L979.3,253.7 L980.1,255.2 L980.9,259.6 L981.7,257.2 L982.6,258.5 L983.4,257.5 L984.2,230.8 L985.0,251.5 L985.8,254.3 L986.5,254.7 L987.3,254.3 L988.1,256.5 L988.9,256.7 L989.7,258.7 L990.4,241.4 L991.2,249.1 L992.0,253.6 L992.7,257.5 L993.5,257.9 L994.3,259.2 L995.0,255.2 L995.8,255.1 L996.5,230.8 L997.3,254.8 L998.0,258.2 L998.7,251.7 L999.5,255.8 L1000.2,250.7 L1000.9,257.8 L1001.6,257.2 L1002.4,249.4 L1003.1,252.8 L1003.8,254.4 L1004.5,260.3 L1005.2,255.6 L1005.9,256.1 L1006.6,257.6 L1007.3,258.3 L1008.0,236.1 L1008.7,257.4 L1009.4,258.9 L1010.1,254.1 L1010.8,255.7 L1011.5,256.4 L1012.2,253.6 L1012.8,254.5 L1013.5,246.5 L1014.2,252.9 L1014.9,255.1 L1015.5,258.0 L1016.2,257.2 L1016.9,257.7 L1017.5,255.3 L1018.2,259.5 L1018.8,235.8 L1019.5,255.7 L1020.1,260.3 L1020.8,262.3 L1021.4,254.7 L1022.1,258.2 L1022.7,254.3 L1023.4,257.6 L1024.0,240.0 L1024.6,259.9 L1025.3,257.5 L1025.9,256.7 L1026.5,258.5 L1027.1,256.7 L1027.8,260.8 L1028.4,255.7 L1029.0,243.8 L1029.6,256.4 L1030.2,253.5 L1030.8,252.2 L1031.5,250.1 L1032.1,260.8 L1032.7,253.2 L1033.3,251.7 L1033.9,249.8 L1034.5,258.7 L1035.1,254.3 L1035.7,249.6 L1036.3,260.5 L1036.8,254.0 L1037.4,252.0 L1038.0,257.8 L1038.6,229.3 L1039.2,259.0 L1039.8,258.2 L1040.4,258.2 L1040.9,254.9 L1041.5,255.8 L1042.1,252.4 L1042.6,258.5 L1043.2,249.4 L1043.8,252.3 L1044.3,253.6 L1044.9,259.7 L1045.5,253.2 L1046.0,257.0 L1046.6,254.1 L1047.2,254.4 L1047.7,232.1 L1048.3,255.0 L1048.8,261.4 L1049.4,259.8 L1049.9,252.9 L1050.5,256.1 L1051.0,251.6 L1051.5,254.4 L1052.1,247.1 L1052.6,251.7 L1053.2,257.9 L1053.7,261.9 L1054.2,248.5 L1054.8,261.4 L1055.3,253.1 L1055.8,252.1 L1056.3,241.4 L1056.9,260.7 L1057.4,251.9 L1057.9,259.8 L1058.4,259.5 L1059.0,256.3 L1059.5,252.5 L1060.0,254.1 L1060.5,247.5 L1061.0,256.5 L1061.5,255.6 L1062.0,258.8 L1062.6,256.1 L1063.1,253.1 L1063.6,256.0 L1064.1,253.5 L1064.6,237.8 L1065.1,256.9 L1065.6,254.9 L1066.1,255.6 L1066.6,253.0 L1067.1,254.4 L1067.6,249.3 L1068.1,255.7 L1068.5,248.1 L1069.0,258.3 L1069.5,254.8 L1070.0,252.7 L1070.5,257.3 L1071.0,255.0 L1071.5,252.5 L1072.0,255.3 L1072.4,241.7 L1072.9,251.7 L1073.4,254.5 L1073.9,253.5 L1074.3,251.0 L1074.8,251.1 L1075.3,255.9 L1075.8,256.5 L1076.2,246.5 L1076.7,255.2 L1077.2,260.9 L1077.6,250.6 L1078.1,254.7 L1078.6,252.3 L1079.0,258.5 L1079.5,250.5 L1079.9,242.5 L1080.4,255.0 L1080.9,259.2 L1081.3,255.2 L1081.8,255.4 L1082.2,255.2 L1082.7,253.2 L1083.1,254.4 L1083.6,248.9 L1084.0,256.1 L1084.5,257.8 L1084.9,254.6 L1085.4,252.5 L1085.8,250.5 L1086.3,251.9 L1086.7,260.3 L1087.1,243.0 L1087.6,249.8 L1088.0,254.3 L1088.5,256.2 L1088.9,253.5 L1089.3,256.1 L1089.8,252.4 L1090.2,254.5 L1090.6,249.1 L1091.1,253.0 L1091.5,256.5 L1091.9,252.7 L1092.4,251.8 L1092.8,256.0 L1093.2,255.6 L1093.6,261.0 L1094.1,240.2 L1094.5,256.1 L1094.9,260.4 L1095.3,259.4 L1095.7,255.0 L1096.2,252.2 L1096.6,254.6 L1097.0,253.0 L1097.4,247.7 L1097.8,258.2 L1098.2,251.9 L1098.7,253.0 L1099.1,254.4 L1099.5,250.7 L1099.9,257.0 L1100.3,255.5 L1100.7,226.3 L1101.1,249.1 L1101.5,254.3 L1101.9,249.6 L1102.3,256.0 L1102.7,253.4 L1103.1,254.8 L1103.5,258.8 L1103.9,249.5 L1104.3,251.7 L1104.7,254.7 L1105.1,254.5 L1105.5,250.3 L1105.9,257.8 L1106.3,258.5 L1106.7,256.1 L1107.1,240.9 L1107.5,250.4 L1107.9,253.4 L1108.3,256.7 L1108.7,256.0 L1109.1,246.1 L1109.5,256.0 L1109.8,256.4 L1110.2,247.0 L1110.6,252.4 L1111.0,253.6 L1111.4,256.8 L1111.8,257.5 L1112.1,252.5 L1112.5,254.4 L1112.9,258.8 L1113.3,237.8 L1113.7,252.0 L1114.0,254.9 L1114.4,254.9 L1114.8,253.5 L1115.2,256.1 L1115.5,258.0 L1115.9,253.2 L1116.3,246.0 L1116.7,253.0 L1117.0,258.2 L1117.4,254.4 L1117.8,254.5 L1118.1,249.1 L1118.5,257.1 L1118.9,258.1 L1119.2,235.8 L1119.6,257.3 L1120.0,255.8 L1120.3,252.9 L1120.7,251.9 L1121.1,249.4 L1121.4,256.2 L1121.8,246.6 L1122.1,246.5 L1122.5,254.7 L1122.9,260.6 L1123.2,254.3 L1123.6,253.9 L1123.9,260.6 L1124.3,253.8 L1124.6,254.6 L1125.0,245.0 L1125.4,252.3 L1125.7,251.2 L1126.1,255.4 L1126.4,253.4 L1126.8,255.9 L1127.1,256.2 L1127.5,253.8 L1127.8,246.2 L1128.2,255.6 L1128.5,260.3 L1128.9,252.3 L1129.2,258.5 L1129.5,253.6 L1129.9,248.9 L1130.2,254.0 L1130.6,244.3 L1130.9,258.1 L1131.3,250.7 L1131.6,254.0 L1131.9,252.4 L1132.3,251.3 L1132.6,254.1 L1133.0,254.8 L1133.3,249.6 L1133.6,262.7 L1134.0,258.2 L1134.3,254.1 L1134.6,254.4 L1135.0,252.8 L1135.3,254.3 L1135.6,253.5 L1136.0,243.3 L1136.3,256.4 L1136.6,254.7 L1137.0,258.5 L1137.3,251.1 L1137.6,253.8 L1138.0,252.5 L1138.3,249.5 L1138.6,248.1 L1138.9,254.0 L1139.3,251.6 L1139.6,257.9 L1139.9,252.6 L1140.2,253.5 L1140.6,258.4 L1140.9,250.1 L1141.2,245.3 L1141.5,251.9 L1141.9,255.0 L1142.2,251.0 L1142.5,250.1 L1142.8,256.2 L1143.1,258.2 L1143.5,254.2 L1143.8,246.1 L1144.1,254.9 L1144.4,255.5 L1144.7,252.4 L1145.0,261.6 L1145.4,255.7 L1145.7,257.7 L1146.0,253.0 L1146.3,241.4 L1146.6,256.9 L1146.9,254.8 L1147.2,257.9 L1147.5,253.8 L1147.9,255.7 L1148.2,254.8 L1148.5,255.8 L1148.8,246.4 L1149.1,254.1 L1149.4,252.3 L1149.7,252.4 L1150.0,256.0 L1150.3,252.1 L1150.6,252.7 L1150.9,252.8 L1151.2,241.3 L1151.5,254.9 L1151.8,251.5 L1152.1,247.5 L1152.4,256.1 L1152.8,252.2 L1153.1,254.7 L1153.4,251.5 L1153.7,247.4 L1154.0,250.7 L1154.3,261.6 L1154.6,255.4 L1154.8,256.5 L1155.1,254.0 L1155.4,255.7 L1155.7,255.5 L1156.0,232.4 L1156.3,248.3 L1156.6,261.7 L1156.9,254.5 L1157.2,252.8 L1157.5,253.6 L1157.8,254.6 L1158.1,257.5 L1158.4,247.2 L1158.7,251.6 L1159.0,250.6 L1159.3,253.4 L1159.6,256.0 L1159.8,253.4 L1160.1,254.3 L1160.4,252.1 L1160.7,244.0 L1161.0,255.4 L1161.3,253.1 L1161.6,256.9 L1161.9,251.3 L1162.1,250.3 L1162.4,256.9 L1162.7,252.4 L1163.0,248.8 L1163.3,250.6 L1163.6,251.0 L1163.8,254.2 L1164.1,250.8 L1164.4,254.8 L1164.7,255.4 L1165.0,255.2 L1165.3,240.6 L1165.5,254.5 L1165.8,253.1 L1166.1,255.3 L1166.4,251.4 L1166.7,250.7 L1166.9,255.0 L1167.2,257.6 L1167.5,248.8 L1167.8,250.3 L1168.0,254.0 L1168.3,257.2 L1168.6,252.8 L1168.9,249.2 L1169.1,258.9 L1169.4,252.2 L1169.7,230.8 L1170.0,256.0 L1170.2,252.1 L1170.5,257.2 L1170.8,252.7 L1171.0,249.8 L1171.3,253.0 L1171.6,256.0 L1171.9,249.6 L1172.1,257.2 L1172.4,258.8 L1172.7,249.0 L1172.9,254.2 L1173.2,256.5 L1173.5,257.2 L1173.7,256.6 L1174.0,221.0 L1174.3,257.2 L1174.5,248.8 L1174.8,255.6 L1175.1,255.7 L1175.3,252.7 L1175.6,249.4 L1175.9,249.8 L1176.1,246.1 L1176.4,252.8 L1176.7,253.1 L1176.9,252.0 L1177.2,252.8 L1177.4,256.2 L1177.7,257.1 L1178.0,253.0 L1178.2,234.1 L1178.5,249.6 L1178.7,253.4 L1179.0,256.4 L1179.3,254.4 L1179.5,254.9 L1179.8,253.9 L1180.0,250.8 L1180.3,248.7 L1180.5,258.8 L1180.8,252.5 L1181.1,254.0 L1181.3,253.0 L1181.6,252.2 L1181.8,254.0 L1182.1,251.2 L1182.3,242.6 L1182.6,253.3 L1182.8,255.8 L1183.1,256.7 L1183.3,251.7 L1183.6,251.9 L1183.9,259.0 L1184.1,256.6 L1184.4,245.7 L1184.6,250.4 L1184.9,255.4 L1185.1,254.0 L1185.4,257.5 L1185.6,246.4 L1185.9,252.1 L1186.1,250.9 L1186.4,244.4 L1186.6,250.8 L1186.9,251.7 L1187.1,254.4 L1187.3,251.3 L1187.6,253.2 L1187.8,249.8 L1188.1,255.5 L1188.3,249.9 L1188.6,251.6 L1188.8,249.8 L1189.1,253.0 L1189.3,255.5 L1189.6,253.8 L1189.8,254.8 L1190.0,248.1 L1190.3,242.2 L1190.5,249.8 L1190.8,252.6 L1191.0,255.0 L1191.3,250.1 L1191.5,248.7 L1191.7,251.8 L1192.0,253.5 L1192.2,246.5 L1192.5,254.5 L1192.7,251.3 L1192.9,255.4 L1193.2,256.2 L1193.4,251.8 L1193.6,252.5 L1193.9,248.0 L1194.1,241.9 L1194.4,253.3 L1194.6,256.6 L1194.8,258.7 L1195.1,258.4 L1195.3,252.1 L1195.5,256.7 L1195.8,250.2 L1196.0,247.7 L1196.2,254.2 L1196.5,248.7 L1196.7,252.7 L1196.9,250.2 L1197.2,254.0 L1197.4,250.7 L1197.6,256.1 L1197.9,223.9 L1198.1,254.7 L1198.3,253.8 L1198.6,251.6 L1198.8,252.9 L1199.0,253.6 L1199.3,251.3 L1199.5,251.1 L1199.7,249.8 L1200.0,251.8 L1200.2,251.5 L1200.4,255.5 L1200.6,252.3 L1200.9,257.1 L1201.1,249.3 L1201.3,254.0 L1201.6,225.0 L1201.8,250.0 L1202.0,253.8 L1202.2,251.7 L1202.5,256.3 L1202.7,255.0 L1202.9,257.3 L1203.1,253.9 L1203.4,247.1 L1203.6,252.7 L1203.8,250.8 L1204.0,256.3 L1204.3,255.8 L1204.5,254.7 L1204.7,251.7 L1204.9,252.3 L1205.2,221.9 L1205.4,251.6 L1205.6,253.8 L1205.8,253.4 L1206.0,249.6 L1206.3,255.0 L1206.5,252.8 L1206.7,248.8 L1206.9,246.9 L1207.1,251.3 L1207.4,255.0 L1207.6,247.8 L1207.8,259.7 L1208.0,256.5 L1208.2,256.3 L1208.5,248.7 L1208.7,241.6 L1208.9,254.1 L1209.1,256.9 L1209.3,252.3 L1209.6,253.0 L1209.8,255.3 L1210.0,257.5 L1210.2,256.4 L1210.4,247.0 L1210.6,252.4 L1210.9,253.1 L1211.1,253.7 L1211.3,258.3 L1211.5,253.2 L1211.7,256.2 L1211.9,253.2 L1212.1,240.2 L1212.4,255.2 L1212.6,256.2 L1212.8,250.5 L1213.0,252.3 L1213.2,255.1 L1213.4,261.8 L1213.6,253.4 L1213.8,247.0 L1214.1,250.1 L1214.3,255.2 L1214.5,255.1 L1214.7,254.5 L1214.9,250.9 L1215.1,256.6 L1215.3,253.6 L1215.5,240.5 L1215.7,252.5 L1215.9,257.7 L1216.2,252.2 L1216.4,254.7 L1216.6,253.9 L1216.8,251.8 L1217.0,250.0 L1217.2,247.1 L1217.4,250.4 L1217.6,251.7 L1217.8,254.1 L1218.0,249.3 L1218.2,252.7 L1218.4,249.6 L1218.6,254.9 L1218.9,243.3 L1219.1,249.8 L1219.3,247.1 L1219.5,251.5 L1219.7,250.7 L1219.9,254.6 L1220.1,257.0 L1220.3,253.9 L1220.5,246.7 L1220.7,258.5 L1220.9,254.6 L1221.1,258.7 L1221.3,252.9 L1221.5,250.8 L1221.7,256.8 L1221.9,254.4 L1222.1,243.2 L1222.3,253.5 L1222.5,256.7 L1222.7,257.0 L1222.9,258.9 L1223.1,251.0 L1223.3,255.3 L1223.5,250.3 L1223.7,248.3 L1223.9,255.1 L1224.1,254.7 L1224.3,251.0 L1224.5,252.8 L1224.7,252.5 L1224.9,257.9 L1225.1,250.7 L1225.3,223.9 L1225.5,259.6 L1225.7,255.0 L1225.9,252.0 L1226.1,247.3 L1226.3,254.3 L1226.5,257.0 L1226.7,247.2 L1226.9,245.9 L1227.1,253.9 L1227.3,256.3 L1227.5,256.0 L1227.7,249.0 L1227.9,254.0 L1228.1,254.7 L1228.3,254.6 L1228.5,217.4 L1228.6,254.9 L1228.8,251.4 L1229.0,252.4 L1229.2,252.5 L1229.4,255.7 L1229.6,251.3 L1229.8,248.6 L1230.0,247.9 L1230.2,255.8 L1230.4,256.8 L1230.6,252.6 L1230.8,254.0 L1231.0,253.5 L1231.2,253.1 L1231.3,257.4 L1231.5,225.0 L1231.7,252.5 L1231.9,253.4 L1232.1,252.5 L1232.3,250.6 L1232.5,253.0 L1232.7,255.6 L1232.9,249.9 L1233.1,248.8 L1233.3,255.2 L1233.4,257.6 L1233.6,253.1 L1233.8,256.1 L1234.0,254.6 L1234.2,251.9 L1234.4,253.1 L1234.6,245.6 L1234.8,252.3 L1234.9,254.3 L1235.1,254.1 L1235.3,254.6 L1235.5,251.3 L1235.7,253.1 L1235.9,254.3 L1236.1,245.7 L1236.3,252.9 L1236.4,254.5 L1236.6,257.4 L1236.8,251.9 L1237.0,252.5 L1237.2,253.0 L1237.4,254.4 L1237.6,243.3 L1237.7,253.8 L1237.9,252.5 L1238.1,253.5 L1238.3,253.5 L1238.5,254.5 L1238.7,252.2 L1238.8,252.5 L1239.0,248.7 L1239.2,251.0 L1239.4,250.9 L1239.6,250.8 L1239.8,253.5 L1239.9,253.7 L1240.1,256.4 L1240.3,251.0 L1240.5,229.0 L1240.7,254.2 L1240.8,254.1 L1241.0,250.7 L1241.2,253.1 L1241.4,255.9 L1241.6,257.2 L1241.7,255.2 L1241.9,248.1 L1242.1,253.0 L1242.3,253.7 L1242.5,255.1 L1242.6,253.7 L1242.8,250.3 L1243.0,256.2 L1243.2,253.0 L1243.4,221.0 L1243.5,251.5 L1243.7,254.4 L1243.9,251.2 L1244.1,255.2 L1244.3,253.1 L1244.4,248.7 L1244.6,247.7 L1244.8,247.0 L1245.0,251.1 L1245.1,247.6 L1245.3,254.6 L1245.5,252.4 L1245.7,248.8 L1245.8,254.5 L1246.0,251.8 L1246.2,228.4 L1246.4,258.5 L1246.5,252.1 L1246.7,253.6 L1246.9,250.5 L1247.1,247.2 L1247.2,251.1 L1247.4,254.1 L1247.6,246.5 L1247.8,252.5 L1247.9,250.2 L1248.1,257.2 L1248.3,256.4 L1248.5,258.9 L1248.6,251.4 L1248.8,253.1 L1249.0,219.3 L1249.2,255.1 L1249.3,254.7 L1249.5,255.7 L1249.7,254.0 L1249.8,254.5 L1250.0,249.1 L1250.2,252.1 L1250.4,248.6 L1250.5,254.7 L1250.7,249.7 L1250.9,251.8 L1251.0,252.2 L1251.2,251.0 L1251.4,248.6 L1251.6,256.5 L1251.7,241.4 L1251.9,258.0 L1252.1,251.7 L1252.2,254.1 L1252.4,255.0 L1252.6,255.2 L1252.7,251.1 L1252.9,253.5 L1253.1,254.5"/>
<path stroke="#f57a2e" d="M55.3,287.3 L175.1,285.7 L245.1,283.6 L294.8,280.2 L333.4,275.1 L364.9,267.0 L391.5,248.9 L414.6,109.5 L435.0,252.1 L453.2,273.1 L469.7,284.7 L484.7,293.4 L498.5,300.4 L511.3,306.2 L523.2,311.1 L534.4,315.4 L544.9,319.5 L554.8,323.0 L564.1,325.3 L573.0,226.1 L581.4,233.2 L589.4,324.2 L597.1,330.5 L604.5,334.1 L611.5,337.2 L618.3,339.8 L624.8,342.4 L631.1,342.3 L637.2,344.5 L643.0,346.5 L648.7,348.5 L654.2,347.9 L659.5,349.3 L664.7,349.9 L669.7,348.5 L674.5,349.9 L679.3,352.5 L683.9,346.2 L688.4,348.2 L692.7,344.5 L697.0,340.8 L701.2,342.5 L705.2,341.7 L709.2,338.9 L713.1,347.6 L716.9,339.4 L720.6,332.9 L724.2,336.9 L727.8,330.6 L731.3,328.7 L734.7,333.5 L738.1,326.4 L741.4,324.1 L744.6,316.2 L747.8,330.1 L750.9,321.9 L753.9,328.1 L756.9,325.0 L759.9,322.1 L762.8,316.8 L765.7,313.4 L768.5,320.4 L771.2,313.9 L774.0,316.5 L776.6,307.1 L779.3,312.8 L781.9,317.3 L784.4,314.8 L787.0,308.3 L789.4,306.6 L791.9,314.2 L794.3,306.9 L796.7,305.9 L799.0,308.8 L801.4,302.0 L803.7,305.9 L805.9,301.6 L808.1,307.8 L810.3,309.1 L812.5,310.8 L814.7,307.5 L816.8,302.0 L818.9,307.8 L821.0,301.0 L823.0,300.7 L825.0,307.5 L827.0,296.6 L829.0,288.6 L830.9,291.4 L832.9,297.6 L834.8,291.8 L836.7,301.6 L838.5,299.4 L840.4,293.5 L842.2,291.2 L844.0,298.0 L845.8,296.4 L847.6,296.5 L849.3,291.2 L851.1,288.8 L852.8,287.3 L854.5,289.2 L856.2,281.3 L857.9,278.4 L859.5,294.1 L861.1,288.8 L862.8,284.3 L864.4,284.7 L866.0,288.2 L867.6,290.3 L869.1,287.3 L870.7,291.8 L872.2,287.8 L873.7,285.2 L875.2,284.3 L876.7,287.6 L878.2,289.2 L879.7,288.4 L881.1,284.1 L882.6,281.4 L884.0,285.4 L885.4,283.9 L886.9,285.2 L888.3,287.4 L889.6,290.2 L891.0,287.9 L892.4,281.4 L893.7,284.2 L895.1,287.3 L896.4,281.9 L897.7,279.0 L899.1,278.4 L900.4,277.6 L901.7,281.4 L902.9,283.3 L904.2,285.4 L905.5,286.3 L906.7,284.0 L908.0,278.7 L909.2,276.9 L910.5,274.3 L911.7,279.3 L912.9,285.3 L914.1,277.3 L915.3,276.5 L916.5,276.0 L917.7,285.4 L918.8,284.3 L920.0,280.8 L921.1,276.5 L922.3,277.7 L923.4,257.8 L924.6,274.4 L925.7,277.5 L926.8,274.6 L927.9,265.7 L929.0,281.9 L930.1,281.4 L931.2,280.3 L932.3,279.4 L933.4,275.5 L934.4,275.1 L935.5,272.7 L936.6,268.6 L937.6,275.6 L938.7,279.4 L939.7,275.1 L940.7,252.5 L941.8,272.5 L942.8,271.7 L943.8,264.1 L944.8,263.7 L945.8,271.7 L946.8,280.0 L947.8,274.1 L948.8,271.6 L949.7,270.7 L950.7,278.3 L951.7,279.4 L952.7,279.8 L953.6,275.5 L954.6,277.3 L955.5,273.5 L956.5,275.5 L957.4,274.4 L958.3,274.5 L959.2,271.6 L960.2,277.8 L961.1,273.7 L962.0,269.2 L962.9,265.6 L963.8,280.4 L964.7,265.5 L965.6,267.2 L966.5,276.0 L967.4,277.6 L968.2,268.9 L969.1,272.5 L970.0,269.9 L970.9,250.5 L971.7,271.9 L972.6,269.4 L973.4,267.8 L974.3,265.8 L975.1,261.8 L976.0,261.9 L976.8,268.4 L977.6,270.4 L978.5,258.6 L979.3,266.3 L980.1,267.1 L980.9,273.9 L981.7,265.3 L982.6,272.2 L983.4,270.7 L984.2,274.5 L985.0,270.7 L985.8,268.0 L986.5,274.9 L987.3,272.1 L988.1,268.3 L988.9,273.5 L989.7,273.4 L990.4,271.4 L991.2,273.8 L992.0,264.6 L992.7,271.8 L993.5,263.7 L994.3,262.9 L995.0,272.4 L995.8,266.7 L996.5,268.9 L997.3,271.8 L998.0,268.1 L998.7,267.5 L999.5,263.1 L1000.2,261.6 L1000.9,271.1 L1001.6,267.9 L1002.4,263.5 L1003.1,260.5 L1003.8,276.8 L1004.5,259.8 L1005.2,266.3 L1005.9,258.5 L1006.6,267.2 L1007.3,269.0 L1008.0,264.9 L1008.7,259.7 L1009.4,264.8 L1010.1,275.5 L1010.8,261.6 L1011.5,271.9 L1012.2,268.9 L1012.8,269.7 L1013.5,272.6 L1014.2,269.9 L1014.9,268.6 L1015.5,266.8 L1016.2,264.2 L1016.9,265.3 L1017.5,270.4 L1018.2,264.4 L1018.8,259.1 L1019.5,259.1 L1020.1,262.7 L1020.8,260.4 L1021.4,259.1 L1022.1,256.9 L1022.7,255.3 L1023.4,264.3 L1024.0,264.0 L1024.6,256.0 L1025.3,255.5 L1025.9,255.4 L1026.5,272.9 L1027.1,263.2 L1027.8,276.9 L1028.4,258.7 L1029.0,232.7 L1029.6,261.6 L1030.2,262.3 L1030.8,255.7 L1031.5,262.8 L1032.1,256.7 L1032.7,258.8 L1033.3,259.6 L1033.9,259.0 L1034.5,260.5 L1035.1,265.9 L1035.7,257.6 L1036.3,257.5 L1036.8,261.3 L1037.4,257.2 L1038.0,256.3 L1038.6,266.1 L1039.2,260.9 L1039.8,262.1 L1040.4,264.1 L1040.9,258.5 L1041.5,263.6 L1042.1,261.7 L1042.6,258.5 L1043.2,258.0 L1043.8,258.0 L1044.3,249.2 L1044.9,261.5 L1045.5,258.0 L1046.0,264.5 L1046.6,256.8 L1047.2,253.7 L1047.7,253.3 L1048.3,261.6 L1048.8,259.9 L1049.4,252.8 L1049.9,258.9 L1050.5,254.0 L1051.0,262.7 L1051.5,252.0 L1052.1,253.6 L1052.6,256.1 L1053.2,261.8 L1053.7,258.8 L1054.2,257.4 L1054.8,256.8 L1055.3,258.4 L1055.8,258.9 L1056.3,257.0 L1056.9,251.5 L1057.4,266.9 L1057.9,263.9 L1058.4,264.7 L1059.0,260.7 L1059.5,265.5 L1060.0,255.0 L1060.5,257.1 L1061.0,258.6 L1061.5,260.5 L1062.0,256.6 L1062.6,256.5 L1063.1,255.8 L1063.6,260.5 L1064.1,254.2 L1064.6,263.8 L1065.1,251.4 L1065.6,271.0 L1066.1,259.7 L1066.6,262.4 L1067.1,253.3 L1067.6,263.6 L1068.1,248.6 L1068.5,263.8 L1069.0,247.6 L1069.5,254.7 L1070.0,256.5 L1070.5,254.6 L1071.0,246.6 L1071.5,252.5 L1072.0,266.6 L1072.4,251.0 L1072.9,255.3 L1073.4,263.6 L1073.9,252.8 L1074.3,261.7 L1074.8,255.3 L1075.3,255.0 L1075.8,258.9 L1076.2,253.0 L1076.7,260.5 L1077.2,254.9 L1077.6,258.2 L1078.1,256.5 L1078.6,246.8 L1079.0,255.0 L1079.5,260.4 L1079.9,255.9 L1080.4,258.8 L1080.9,255.1 L1081.3,254.4 L1081.8,254.7 L1082.2,254.7 L1082.7,257.4 L1083.1,252.9 L1083.6,250.0 L1084.0,257.6 L1084.5,255.0 L1084.9,254.4 L1085.4,248.9 L1085.8,249.6 L1086.3,257.8 L1086.7,254.1 L1087.1,261.1 L1087.6,258.6 L1088.0,254.1 L1088.5,251.3 L1088.9,249.7 L1089.3,255.4 L1089.8,260.1 L1090.2,252.1 L1090.6,254.6 L1091.1,251.8 L1091.5,253.0 L1091.9,250.4 L1092.4,250.6 L1092.8,249.7 L1093.2,255.5 L1093.6,248.9 L1094.1,255.6 L1094.5,252.9 L1094.9,244.8 L1095.3,251.5 L1095.7,258.4 L1096.2,246.3 L1096.6,248.4 L1097.0,247.7 L1097.4,251.9 L1097.8,251.2 L1098.2,253.8 L1098.7,255.8 L1099.1,247.0 L1099.5,253.9 L1099.9,254.3 L1100.3,254.1 L1100.7,238.6 L1101.1,249.1 L1101.5,253.7 L1101.9,252.5 L1102.3,250.4 L1102.7,249.0 L1103.1,258.1 L1103.5,248.8 L1103.9,252.9 L1104.3,254.6 L1104.7,253.4 L1105.1,249.1 L1105.5,245.5 L1105.9,251.4 L1106.3,249.8 L1106.7,254.8 L1107.1,250.0 L1107.5,248.7 L1107.9,257.2 L1108.3,253.6 L1108.7,248.7 L1109.1,258.1 L1109.5,252.9 L1109.8,249.3 L1110.2,257.7 L1110.6,252.9 L1111.0,251.2 L1111.4,248.1 L1111.8,256.0 L1112.1,247.2 L1112.5,250.1 L1112.9,246.8 L1113.3,246.9 L1113.7,249.9 L1114.0,249.3 L1114.4,257.5 L1114.8,256.0 L1115.2,254.7 L1115.5,252.2 L1115.9,247.5 L1116.3,257.5 L1116.7,252.0 L1117.0,255.7 L1117.4,256.5 L1117.8,245.3 L1118.1,250.4 L1118.5,244.7 L1118.9,246.3 L1119.2,254.0 L1119.6,257.4 L1120.0,242.9 L1120.3,252.0 L1120.7,254.7 L1121.1,247.9 L1121.4,249.9 L1121.8,252.8 L1122.1,251.6 L1122.5,249.7 L1122.9,250.0 L1123.2,247.4 L1123.6,251.5 L1123.9,251.4 L1124.3,247.9 L1124.6,248.9 L1125.0,246.0 L1125.4,250.9 L1125.7,250.3 L1126.1,254.2 L1126.4,244.4 L1126.8,255.0 L1127.1,249.1 L1127.5,253.1 L1127.8,248.5 L1128.2,247.0 L1128.5,255.8 L1128.9,250.5 L1129.2,256.1 L1129.5,244.4 L1129.9,251.2 L1130.2,255.4 L1130.6,252.1 L1130.9,244.7 L1131.3,244.0 L1131.6,244.7 L1131.9,252.3 L1132.3,249.9 L1132.6,243.3 L1133.0,252.0 L1133.3,250.5 L1133.6,252.7 L1134.0,253.5 L1134.3,244.7 L1134.6,246.8 L1135.0,247.4 L1135.3,246.9 L1135.6,245.3 L1136.0,243.4 L1136.3,249.0 L1136.6,250.2 L1137.0,252.7 L1137.3,244.9 L1137.6,250.7 L1138.0,254.3 L1138.3,249.8 L1138.6,248.6 L1138.9,245.6 L1139.3,245.0 L1139.6,251.3 L1139.9,251.6 L1140.2,249.8 L1140.6,253.0 L1140.9,248.9 L1141.2,246.8 L1141.5,248.3 L1141.9,254.4 L1142.2,252.8 L1142.5,243.6 L1142.8,252.1 L1143.1,245.6 L1143.5,245.9 L1143.8,249.4 L1144.1,251.9 L1144.4,247.4 L1144.7,251.4 L1145.0,248.8 L1145.4,247.7 L1145.7,250.7 L1146.0,248.9 L1146.3,249.1 L1146.6,252.5 L1146.9,248.6 L1147.2,250.3 L1147.5,254.6 L1147.9,249.1 L1148.2,248.9 L1148.5,250.0 L1148.8,255.3 L1149.1,244.9 L1149.4,245.2 L1149.7,245.3 L1150.0,246.4 L1150.3,252.2 L1150.6,247.1 L1150.9,251.0 L1151.2,239.5 L1151.5,249.4 L1151.8,245.0 L1152.1,253.2 L1152.4,251.8 L1152.8,249.4 L1153.1,244.8 L1153.4,245.4 L1153.7,246.3 L1154.0,254.2 L1154.3,243.1 L1154.6,250.7 L1154.8,241.3 L1155.1,240.4 L1155.4,244.2 L1155.7,243.5 L1156.0,251.8 L1156.3,237.6 L1156.6,246.3 L1156.9,243.4 L1157.2,250.2 L1157.5,247.3 L1157.8,251.4 L1158.1,247.9 L1158.4,246.9 L1158.7,246.0 L1159.0,241.8 L1159.3,245.1 L1159.6,246.0 L1159.8,246.7 L1160.1,239.4 L1160.4,248.9 L1160.7,242.4 L1161.0,254.0 L1161.3,250.0 L1161.6,245.2 L1161.9,247.3 L1162.1,235.6 L1162.4,237.2 L1162.7,252.2 L1163.0,250.6 L1163.3,247.1 L1163.6,240.2 L1163.8,242.4 L1164.1,245.3 L1164.4,251.7 L1164.7,249.6 L1165.0,256.3 L1165.3,252.1 L1165.5,244.8 L1165.8,243.5 L1166.1,251.2 L1166.4,245.9 L1166.7,240.3 L1166.9,245.7 L1167.2,247.4 L1167.5,244.0 L1167.8,244.3 L1168.0,245.9 L1168.3,248.1 L1168.6,247.7 L1168.9,245.8 L1169.1,248.1 L1169.4,241.2 L1169.7,242.8 L1170.0,242.0 L1170.2,238.6 L1170.5,240.2 L1170.8,240.8 L1171.0,244.6 L1171.3,246.6 L1171.6,237.4 L1171.9,248.0 L1172.1,247.8 L1172.4,248.6 L1172.7,245.2 L1172.9,244.5 L1173.2,242.6 L1173.5,246.5 L1173.7,251.2 L1174.0,244.7 L1174.3,242.7 L1174.5,245.6 L1174.8,246.1 L1175.1,243.9 L1175.3,241.2 L1175.6,245.8 L1175.9,250.0 L1176.1,247.3 L1176.4,246.1 L1176.7,251.1 L1176.9,243.1 L1177.2,247.9 L1177.4,243.9 L1177.7,244.8 L1178.0,246.4 L1178.2,240.3 L1178.5,247.1 L1178.7,247.5 L1179.0,244.4 L1179.3,242.7 L1179.5,245.3 L1179.8,248.3 L1180.0,243.1 L1180.3,243.4 L1180.5,238.8 L1180.8,245.9 L1181.1,244.5 L1181.3,246.9 L1181.6,249.8 L1181.8,244.9 L1182.1,242.4 L1182.3,248.2 L1182.6,247.2 L1182.8,248.7 L1183.1,240.8 L1183.3,247.0 L1183.6,243.2 L1183.9,247.7 L1184.1,244.7 L1184.4,246.9 L1184.6,252.2 L1184.9,244.6 L1185.1,243.2 L1185.4,251.3 L1185.6,245.4 L1185.9,246.1 L1186.1,248.1 L1186.4,245.5 L1186.6,250.8 L1186.9,243.9 L1187.1,241.0 L1187.3,248.6 L1187.6,244.9 L1187.8,240.2 L1188.1,244.2 L1188.3,246.2 L1188.6,247.4 L1188.8,244.0 L1189.1,245.0 L1189.3,242.6 L1189.6,249.2 L1189.8,241.1 L1190.0,245.7 L1190.3,242.4 L1190.5,246.7 L1190.8,248.5 L1191.0,246.2 L1191.3,247.3 L1191.5,245.5 L1191.7,242.3 L1192.0,241.0 L1192.2,243.7 L1192.5,246.0 L1192.7,245.7 L1192.9,242.4 L1193.2,240.7 L1193.4,245.2 L1193.6,244.6 L1193.9,246.5 L1194.1,243.5 L1194.4,241.1 L1194.6,253.2 L1194.8,243.3 L1195.1,245.8 L1195.3,251.3 L1195.5,243.1 L1195.8,244.3 L1196.0,242.8 L1196.2,248.2 L1196.5,237.3 L1196.7,243.6 L1196.9,245.0 L1197.2,239.2 L1197.4,241.9 L1197.6,241.3 L1197.9,240.2 L1198.1,250.3 L1198.3,238.6 L1198.6,244.9 L1198.8,242.9 L1199.0,240.9 L1199.3,246.0 L1199.5,242.7 L1199.7,241.3 L1200.0,243.8 L1200.2,242.1 L1200.4,248.7 L1200.6,247.4 L1200.9,247.2 L1201.1,242.5 L1201.3,231.9 L1201.6,242.8 L1201.8,244.0 L1202.0,243.8 L1202.2,240.5 L1202.5,241.3 L1202.7,247.1 L1202.9,240.3 L1203.1,243.6 L1203.4,240.9 L1203.6,249.7 L1203.8,248.3 L1204.0,241.6 L1204.3,249.0 L1204.5,242.2 L1204.7,242.4 L1204.9,242.9 L1205.2,242.3 L1205.4,242.5 L1205.6,242.0 L1205.8,244.6 L1206.0,243.4 L1206.3,234.2 L1206.5,239.8 L1206.7,241.4 L1206.9,242.1 L1207.1,245.5 L1207.4,242.5 L1207.6,244.0 L1207.8,240.3 L1208.0,246.1 L1208.2,250.6 L1208.5,244.9 L1208.7,241.0 L1208.9,235.5 L1209.1,240.0 L1209.3,246.2 L1209.6,243.8 L1209.8,246.1 L1210.0,243.7 L1210.2,245.9 L1210.4,248.2 L1210.6,241.7 L1210.9,242.4 L1211.1,243.6 L1211.3,241.9 L1211.5,236.7 L1211.7,242.6 L1211.9,244.2 L1212.1,240.3 L1212.4,248.1 L1212.6,240.6 L1212.8,245.4 L1213.0,245.5 L1213.2,242.6 L1213.4,237.7 L1213.6,245.2 L1213.8,239.9 L1214.1,241.7 L1214.3,247.2 L1214.5,240.0 L1214.7,245.4 L1214.9,247.4 L1215.1,245.3 L1215.3,245.1 L1215.5,240.9 L1215.7,245.0 L1215.9,238.1 L1216.2,242.1 L1216.4,245.0 L1216.6,245.3 L1216.8,242.0 L1217.0,249.0 L1217.2,249.5 L1217.4,245.4 L1217.6,240.7 L1217.8,242.1 L1218.0,242.6 L1218.2,243.3 L1218.4,249.4 L1218.6,243.6 L1218.9,248.1 L1219.1,240.0 L1219.3,242.6 L1219.5,242.8 L1219.7,241.3 L1219.9,241.5 L1220.1,241.8 L1220.3,241.4 L1220.5,244.3 L1220.7,246.6 L1220.9,241.4 L1221.1,237.9 L1221.3,239.3 L1221.5,243.1 L1221.7,240.5 L1221.9,243.8 L1222.1,241.2 L1222.3,244.3 L1222.5,241.9 L1222.7,236.1 L1222.9,239.9 L1223.1,237.7 L1223.3,244.7 L1223.5,244.4 L1223.7,242.4 L1223.9,240.6 L1224.1,242.9 L1224.3,239.1 L1224.5,244.0 L1224.7,238.0 L1224.9,239.2 L1225.1,245.7 L1225.3,240.4 L1225.5,242.9 L1225.7,239.0 L1225.9,243.8 L1226.1,241.2 L1226.3,240.5 L1226.5,250.7 L1226.7,248.0 L1226.9,241.7 L1227.1,242.5 L1227.3,238.9 L1227.5,241.4 L1227.7,246.0 L1227.9,241.0 L1228.1,244.4 L1228.3,242.8 L1228.5,243.6 L1228.6,240.9 L1228.8,246.4 L1229.0,245.5 L1229.2,248.9 L1229.4,235.3 L1229.6,245.1 L1229.8,244.6 L1230.0,245.5 L1230.2,243.9 L1230.4,243.3 L1230.6,240.0 L1230.8,241.3 L1231.0,240.9 L1231.2,243.7 L1231.3,242.1 L1231.5,238.1 L1231.7,241.9 L1231.9,240.9 L1232.1,248.1 L1232.3,240.2 L1232.5,241.0 L1232.7,237.8 L1232.9,250.3 L1233.1,241.7 L1233.3,242.1 L1233.4,241.5 L1233.6,243.7 L1233.8,241.1 L1234.0,239.6 L1234.2,241.6 L1234.4,242.6 L1234.6,242.4 L1234.8,242.9 L1234.9,241.6 L1235.1,243.9 L1235.3,247.9 L1235.5,237.5 L1235.7,247.1 L1235.9,242.0 L1236.1,245.7 L1236.3,242.5 L1236.4,244.6 L1236.6,241.8 L1236.8,244.2 L1237.0,245.7 L1237.2,240.6 L1237.4,237.4 L1237.6,240.5 L1237.7,241.2 L1237.9,244.9 L1238.1,241.8 L1238.3,240.2 L1238.5,243.6 L1238.7,238.7 L1238.8,241.7 L1239.0,240.4 L1239.2,243.1 L1239.4,243.0 L1239.6,240.8 L1239.8,240.3 L1239.9,240.4 L1240.1,244.6 L1240.3,243.8 L1240.5,241.5 L1240.7,247.2 L1240.8,238.2 L1241.0,240.4 L1241.2,241.3 L1241.4,243.6 L1241.6,238.9 L1241.7,242.3 L1241.9,235.5 L1242.1,240.2 L1242.3,246.0 L1242.5,239.1 L1242.6,243.0 L1242.8,243.0 L1243.0,242.1 L1243.2,241.7 L1243.4,240.5 L1243.5,238.9 L1243.7,239.9 L1243.9,243.5 L1244.1,245.5 L1244.3,243.8 L1244.4,240.1 L1244.6,238.6 L1244.8,235.6 L1245.0,245.4 L1245.1,241.0 L1245.3,241.9 L1245.5,242.5 L1245.7,240.8 L1245.8,242.0 L1246.0,242.0 L1246.2,243.2 L1246.4,239.9 L1246.5,237.9 L1246.7,236.1 L1246.9,242.8 L1247.1,244.4 L1247.2,241.9 L1247.4,243.7 L1247.6,237.9 L1247.8,243.6 L1247.9,240.8 L1248.1,245.2 L1248.3,242.1 L1248.5,240.4 L1248.6,236.3 L1248.8,243.2 L1249.0,239.9 L1249.2,247.5 L1249.3,244.8 L1249.5,243.5 L1249.7,242.5 L1249.8,239.6 L1250.0,239.0 L1250.2,246.0 L1250.4,239.3 L1250.5,244.4 L1250.7,235.2 L1250.9,239.9 L1251.0,240.4 L1251.2,241.4 L1251.4,241.0 L1251.6,240.9 L1251.7,243.0 L1251.9,238.5 L1252.1,240.0 L1252.2,238.5 L1252.4,241.0 L1252.6,238.7 L1252.7,243.2 L1252.9,242.0 L1253.1,244.3"/>
</g>
<g fill="#808000" stroke="#ffff00" stroke-width="1.05" stroke-linejoin="miter"><path d="M408.6,98.5 L420.3,98.5 L414.5,108.8 Z"/><path d="M567.0,215.5 L578.7,215.5 L572.8,225.8 Z"/></g>
<g fill="#b4b4b4" stroke="#b4b4b4" stroke-width="0.2" font-family="Liberation Sans, sans-serif" font-size="10.8"><text x="50.5" y="80.9" text-anchor="end">60</text><text x="50.5" y="137.5" text-anchor="end">40</text><text x="50.5" y="194.2" text-anchor="end">20</text><text x="50.5" y="250.8" text-anchor="end">0</text><text x="50.5" y="307.4" text-anchor="end">-20</text><text x="50.5" y="364.1" text-anchor="end">-40</text><text x="50.5" y="420.7" text-anchor="end">-60</text><text x="50.5" y="477.4" text-anchor="end">-80</text><text x="50.5" y="534.0" text-anchor="end">-100</text><text x="136.6" y="565" text-anchor="end" font-size="11.1" stroke="#b4b4b4" stroke-width="0.45">10</text><text x="137.0" y="560.3" font-size="9.4" stroke="#b4b4b4" stroke-width="0.45">-1</text><text x="534.5" y="565" text-anchor="end" font-size="11.1" stroke="#b4b4b4" stroke-width="0.45">10</text><text x="534.9" y="560.3" font-size="9.4" stroke="#b4b4b4" stroke-width="0.45">0</text><text x="932.4" y="565" text-anchor="end" font-size="11.1" stroke="#b4b4b4" stroke-width="0.45">10</text><text x="932.8" y="560.3" font-size="9.4" stroke="#b4b4b4" stroke-width="0.45">1</text></g>
<text x="654.4" y="582" text-anchor="middle" fill="#b9b9b9" font-family="Liberation Sans, sans-serif" font-size="12.9">Frequency (kHz)</text>
<text transform="translate(19.2,305.3) rotate(-90)" text-anchor="middle" fill="#b9b9b9" font-family="Liberation Sans, sans-serif" font-size="12.8">Power (dBm)</text>
</svg>
<div id="peaks"><span>Peaks</span></div>
<div id="tbl">
<div class="h" style="top:26px"></div><div class="h" style="top:48px"></div>
<div class="v" style="left:317px"></div><div class="v" style="left:635px"></div><div class="v" style="left:953px"></div>
<div class="c b" style="left:3px;top:8px">Vin</div><div class="c b" style="left:322px;top:8px;transform:scaleX(0.87)">P1</div><div class="c b" style="left:640px;top:8px;transform:scaleX(0.87)">P2</div><div class="c b" style="left:958px;top:8px;transform:scaleX(0.87)">P3</div>
<div class="c" style="left:3px;top:31px">Frequency (kHz)</div><div class="c" style="left:321px;top:31px">0.5000</div><div class="c" style="left:639px;top:31px">1.2500</div>
<div class="c" style="left:3px;top:53px">Power (dBm)</div><div class="c" style="left:321px;top:53px">48.5702</div><div class="c" style="left:639px;top:53px">7.4019</div>
</div>
<div style="position:absolute;left:0;top:689px;width:1273px;height:1px;background:#242424"></div><div style="position:absolute;left:0;top:690px;width:1273px;height:2px;background:#7e7e7e"></div><div style="position:absolute;left:0;top:692px;width:1273px;height:1px;background:#f2f2f2;z-index:3"></div><div id="status"><span style="left:7px">Ready</span>
<span id="st" style="left:524.7px;transform:scaleX(0.9947)">ΔT=16.0000 ms&nbsp; Samples/Update=2048&nbsp; VBW=1.1052 Hz&nbsp; RBW=62.5000 Hz&nbsp; Sample Rate=128.0000 kHz&nbsp; Updates=62&nbsp; T=0.9925</span>
<svg style="position:absolute;left:1228px;top:-2px" width="45" height="24" viewBox="0 0 45 24"><g fill="#4f4f4f"><circle cx="8.3" cy="7.1" r="1.3"/><circle cx="8.3" cy="13.4" r="1.3"/><circle cx="8.3" cy="19.6" r="1.3"/></g><path d="M29.2,9.3 L40.8,9.3 L35,15.2 Z" fill="#909090"/><rect x="29.2" y="16.2" width="11.6" height="1.4" fill="#909090"/></svg>
</div>
</div>
</body></html>
